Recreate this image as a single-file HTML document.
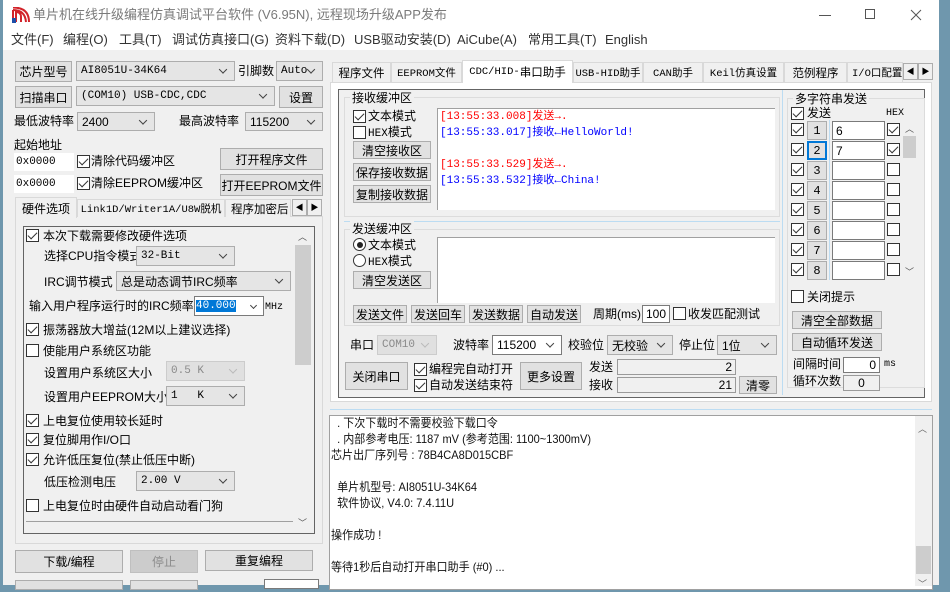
<!DOCTYPE html>
<html><head><meta charset="utf-8"><style>
*{box-sizing:border-box}
body{margin:0;width:950px;height:585px;overflow:hidden;background:#6f97ad;font-family:"Liberation Sans","Noto Sans CJK SC",sans-serif;font-size:12px;color:#000;position:relative}
.a{position:absolute;white-space:nowrap}
.t{position:absolute;white-space:nowrap;line-height:16px;height:16px}
.m{font-family:"Liberation Mono","Noto Sans CJK SC",monospace;font-size:11px}
.btn{position:absolute;background:#e1e1e1;border:1px solid #adadad;display:flex;align-items:center;justify-content:center;white-space:nowrap;font-size:12px}
.dis{background:#cccccc;color:#8c8c8c;border-color:#bfbfbf}
.cmb{position:absolute;background:#e5e5e5;border:1px solid #adadad;padding-left:4px;display:flex;align-items:center;white-space:nowrap}
.cmb::after{content:"";position:absolute;right:8px;top:50%;width:5px;height:5px;border-right:1px solid #444;border-bottom:1px solid #444;transform:translateY(-75%) rotate(45deg)}
.cmb.d{color:#8a8a8a;background:#e0e0e0;border-color:#ccc}
.cmb.d::after{border-color:#bbb}
.in{position:absolute;background:#fff;border:1px solid #7a7a7a;padding:0 3px;display:flex;align-items:center;white-space:nowrap}
.chk{position:absolute;width:13px;height:13px;background:#fff;border:1px solid #333}
.chk.on::after{content:"";position:absolute;left:3px;top:0px;width:4px;height:8px;border-right:1.5px solid #333;border-bottom:1.5px solid #333;transform:rotate(45deg)}
.rad{position:absolute;width:13px;height:13px;background:#fff;border:1px solid #333;border-radius:50%}
.rad.on::after{content:"";position:absolute;left:2.5px;top:2.5px;width:6px;height:6px;border-radius:50%;background:#222}
.grp{position:absolute;border:1px solid #dcdcdc}
.tab{position:absolute;border:1px solid #d9d9d9;border-bottom:none;background:#f0f0f0;display:flex;align-items:center;justify-content:center;white-space:nowrap;font-size:11.5px;overflow:hidden}
.tab.m{font-size:10.5px}
.arr{position:absolute;width:15px;height:17px;background:#f0f0f0;border:1px solid #adadad;font-size:8px;display:flex;align-items:center;justify-content:center}
</style></head><body>
<div class="a" style="left:3px;top:0;width:936px;height:585px;background:#f0f0f0"></div>
<div class="a" style="left:3px;top:0;width:936px;height:50px;background:#fff"></div>
<svg class="a" style="left:12px;top:7px" width="18" height="16" viewBox="0 0 18 16"><path d="M1 15 L1 3 M4 15 L4 5 Q9 5 9 10 L9 15 M1 3 Q13 3 14 15 M1 0.5 Q17 0.5 17 15" stroke="#d2232a" stroke-width="2" fill="none"/><rect x="0" y="11" width="4" height="5" fill="#1e4fa8"/></svg>
<div class="t" style="left:33px;top:7px;color:#7a7a7a;font-size:13px">单片机在线升级编程仿真调试平台软件 (V6.95N), 远程现场升级APP发布</div>
<div class="a" style="left:819px;top:15px;width:12px;height:1px;background:#555"></div>
<div class="a" style="left:865px;top:9px;width:10px;height:10px;border:1px solid #555"></div>
<svg class="a" style="left:910px;top:9px" width="12" height="12"><path d="M1 1L11 11M11 1L1 11" stroke="#555"/></svg>
<div class="t" style="left:11px;top:32px;color:#333;font-size:13px">文件(F)</div>
<div class="t" style="left:63px;top:32px;color:#333;font-size:13px">编程(O)</div>
<div class="t" style="left:119px;top:32px;color:#333;font-size:13px">工具(T)</div>
<div class="t" style="left:172px;top:32px;color:#333;font-size:13px">调试仿真接口(G)</div>
<div class="t" style="left:275px;top:32px;color:#333;font-size:13px">资料下载(D)</div>
<div class="t" style="left:354px;top:32px;color:#333;font-size:13px">USB驱动安装(D)</div>
<div class="t" style="left:457px;top:32px;color:#333;font-size:13px">AiCube(A)</div>
<div class="t" style="left:528px;top:32px;color:#333;font-size:13px">常用工具(T)</div>
<div class="t" style="left:605px;top:32px;color:#333;font-size:13px">English</div>

<div class="btn" style="left:15px;top:61px;width:57px;height:21px">芯片型号</div>
<div class="cmb m" style="left:76px;top:61px;width:159px;height:20px">AI8051U-34K64</div>
<div class="t" style="left:238px;top:63px">引脚数</div>
<div class="cmb m" style="left:276px;top:61px;width:47px;height:20px">Auto</div>
<div class="btn" style="left:15px;top:86px;width:57px;height:22px">扫描串口</div>
<div class="cmb m" style="left:76px;top:86px;width:199px;height:20px">(COM10) USB-CDC,CDC</div>
<div class="btn" style="left:279px;top:86px;width:44px;height:22px">设置</div>
<div class="t" style="left:14px;top:113px">最低波特率</div>
<div class="cmb" style="left:77px;top:112px;width:78px;height:19px;font-size:12px">2400</div>
<div class="t" style="left:179px;top:113px">最高波特率</div>
<div class="cmb" style="left:245px;top:112px;width:78px;height:19px;font-size:12px">115200</div>
<div class="t" style="left:14px;top:137px">起始地址</div>
<div class="in m" style="left:14px;top:153px;width:60px;height:18px;border-color:#fff;padding:0 1px">0x0000</div>
<div class="chk on" style="left:77px;top:155px"></div><div class="t" style="left:91px;top:153px">清除代码缓冲区</div>
<div class="btn" style="left:220px;top:148px;width:103px;height:22px">打开程序文件</div>
<div class="in m" style="left:14px;top:175px;width:60px;height:18px;border-color:#fff;padding:0 1px">0x0000</div>
<div class="chk on" style="left:77px;top:177px"></div><div class="t" style="left:91px;top:175px">清除EEPROM缓冲区</div>
<div class="btn" style="left:220px;top:174px;width:103px;height:22px">打开EEPROM文件</div>
<div class="a" style="left:15px;top:216px;width:308px;height:328px;border:1px solid #d9d9d9;background:#f0f0f0"></div>
<div class="tab" style="left:15px;top:197px;width:62px;height:21px;z-index:2;font-size:12px">硬件选项</div>
<div class="tab m" style="left:77px;top:199px;width:148px;height:18px">Link1D/Writer1A/U8W脱机</div>
<div class="tab" style="left:225px;top:199px;width:66px;height:18px;justify-content:flex-start;padding-left:5px">程序加密后</div>
<div class="arr" style="left:292px;top:199px">◀</div><div class="arr" style="left:307px;top:199px">▶</div>
<div class="a" style="left:23px;top:226px;width:292px;height:308px;border:1px solid #646464;background:#f0f0f0"></div>
<div class="a" style="left:295px;top:245px;width:16px;height:120px;background:#cdcdcd"></div>
<div class="t" style="left:298px;top:229px;font-size:9px;color:#555">︿</div>
<div class="t" style="left:298px;top:515px;font-size:9px;color:#555">﹀</div>
<div class="chk on" style="left:26px;top:229px"></div><div class="t" style="left:43px;top:228px">本次下载需要修改硬件选项</div>
<div class="t" style="left:44px;top:248px">选择CPU指令模式</div>
<div class="cmb m" style="left:136px;top:246px;width:99px;height:20px">32-Bit</div>
<div class="t" style="left:44px;top:274px">IRC调节模式</div>
<div class="cmb" style="left:116px;top:271px;width:175px;height:20px">总是动态调节IRC频率</div>
<div class="t" style="left:29px;top:298px">输入用户程序运行时的IRC频率</div>
<div class="in m" style="left:194px;top:296px;width:70px;height:20px;padding-left:1px"><span style="background:#0078d7;color:#fff">40.000</span></div>
<div class="a" style="left:251px;top:303px;width:5px;height:5px;border-right:1px solid #444;border-bottom:1px solid #444;transform:rotate(45deg)"></div>
<div class="t m" style="left:265px;top:300px;font-size:10px">MHz</div>
<div class="chk on" style="left:26px;top:323px"></div><div class="t" style="left:43px;top:322px">振荡器放大增益(12M以上建议选择)</div>
<div class="chk" style="left:26px;top:344px"></div><div class="t" style="left:43px;top:343px">使能用户系统区功能</div>
<div class="t" style="left:44px;top:365px">设置用户系统区大小</div>
<div class="cmb d m" style="left:166px;top:361px;width:79px;height:20px">0.5 K</div>
<div class="t" style="left:44px;top:389px">设置用户EEPROM大小</div>
<div class="cmb m" style="left:166px;top:386px;width:79px;height:20px">1&nbsp;&nbsp;&nbsp;K</div>
<div class="chk on" style="left:26px;top:414px"></div><div class="t" style="left:43px;top:413px">上电复位使用较长延时</div>
<div class="chk on" style="left:26px;top:433px"></div><div class="t" style="left:43px;top:432px">复位脚用作I/O口</div>
<div class="chk on" style="left:26px;top:453px"></div><div class="t" style="left:43px;top:452px">允许低压复位(禁止低压中断)</div>
<div class="t" style="left:44px;top:474px">低压检测电压</div>
<div class="cmb m" style="left:136px;top:471px;width:99px;height:20px">2.00 V</div>
<div class="chk" style="left:26px;top:499px"></div><div class="t" style="left:43px;top:498px">上电复位时由硬件自动启动看门狗</div>
<div class="a" style="left:26px;top:521px;width:267px;height:1px;background:#a0a0a0"></div>
<div class="btn" style="left:15px;top:550px;width:108px;height:23px">下载/编程</div>
<div class="btn dis" style="left:130px;top:550px;width:68px;height:23px">停止</div>
<div class="btn" style="left:205px;top:550px;width:108px;height:21px">重复编程</div>
<div class="btn" style="left:15px;top:580px;width:108px;height:10px"></div>
<div class="btn" style="left:130px;top:580px;width:68px;height:10px"></div>
<div class="in" style="left:264px;top:579px;width:55px;height:10px"></div>

<div class="a" style="left:330px;top:82px;width:602px;height:320px;background:#fff;border:1px solid #d9d9d9"></div>
<div class="tab" style="left:332px;top:62px;width:59px;height:20px">程序文件</div>
<div class="tab m" style="left:391px;top:62px;width:71px;height:20px">EEPROM文件</div>
<div class="tab" style="left:462px;top:60px;width:111px;height:23px;background:#fff;z-index:2"><span class="m" style="font-size:10.5px">CDC/HID-</span>串口助手</div>
<div class="tab m" style="left:573px;top:62px;width:70px;height:20px">USB-HID助手</div>
<div class="tab m" style="left:643px;top:62px;width:60px;height:20px">CAN助手</div>
<div class="tab m" style="left:703px;top:62px;width:81px;height:20px">Keil仿真设置</div>
<div class="tab" style="left:784px;top:62px;width:63px;height:20px">范例程序</div>
<div class="tab m" style="left:847px;top:62px;width:56px;height:20px;justify-content:flex-start;padding-left:4px">I/O口配置</div>
<div class="arr" style="left:903px;top:63px">◀</div><div class="arr" style="left:918px;top:63px">▶</div>
<div class="a" style="left:338px;top:89px;width:587px;height:309px;border:1px solid #646464;background:#f0f0f0"></div>
<div class="grp" style="left:344px;top:97px;width:436px;height:120px"></div>
<div class="t" style="left:350px;top:90px;background:#f0f0f0;padding:0 2px">接收缓冲区</div>
<div class="chk on" style="left:353px;top:110px"></div><div class="t" style="left:368px;top:108px">文本模式</div>
<div class="chk" style="left:353px;top:126px"></div><div class="t m" style="left:368px;top:124px">HEX<span style="font-family:'Noto Sans CJK SC';font-size:12px">模式</span></div>
<div class="btn" style="left:353px;top:141px;width:78px;height:18px">清空接收区</div>
<div class="btn" style="left:353px;top:163px;width:78px;height:18px">保存接收数据</div>
<div class="btn" style="left:353px;top:185px;width:78px;height:18px">复制接收数据</div>
<div class="a" style="left:437px;top:108px;width:338px;height:102px;background:#fff;border-left:1px solid #a0a0a0;border-top:1px solid #a0a0a0"></div>
<div class="t m" style="left:440px;top:109px;color:#f00">[13:55:33.008]发送→.</div>
<div class="t m" style="left:440px;top:125px;color:#00f">[13:55:33.017]接收←HelloWorld!</div>
<div class="t m" style="left:440px;top:157px;color:#f00">[13:55:33.529]发送→.</div>
<div class="t m" style="left:440px;top:173px;color:#00f">[13:55:33.532]接收←China!</div>
<div class="a" style="left:344px;top:221px;width:436px;height:1px;background:#bcdcf2"></div>
<div class="grp" style="left:344px;top:229px;width:436px;height:97px"></div>
<div class="t" style="left:350px;top:221px;background:#f0f0f0;padding:0 2px">发送缓冲区</div>
<div class="rad on" style="left:353px;top:238px"></div><div class="t" style="left:368px;top:237px">文本模式</div>
<div class="rad" style="left:353px;top:254px"></div><div class="t m" style="left:368px;top:253px">HEX<span style="font-family:'Noto Sans CJK SC';font-size:12px">模式</span></div>
<div class="btn" style="left:353px;top:271px;width:78px;height:18px">清空发送区</div>
<div class="a" style="left:437px;top:237px;width:338px;height:66px;background:#fff;border-left:1px solid #a0a0a0;border-top:1px solid #a0a0a0"></div>
<div class="btn" style="left:353px;top:305px;width:54px;height:18px">发送文件</div>
<div class="btn" style="left:411px;top:305px;width:54px;height:18px">发送回车</div>
<div class="btn" style="left:469px;top:305px;width:54px;height:18px">发送数据</div>
<div class="btn" style="left:527px;top:305px;width:54px;height:18px">自动发送</div>
<div class="t" style="left:593px;top:306px">周期(ms)</div>
<div class="in" style="left:642px;top:305px;width:28px;height:18px;font-size:12px;justify-content:center">100</div>
<div class="chk" style="left:673px;top:307px"></div><div class="t" style="left:688px;top:306px">收发匹配测试</div>
<div class="t" style="left:350px;top:337px">串口</div>
<div class="cmb d m" style="left:377px;top:335px;width:60px;height:20px">COM10</div>
<div class="t" style="left:453px;top:337px">波特率</div>
<div class="cmb" style="left:492px;top:335px;width:70px;height:20px;font-size:12px;background:#fff;border-color:#7a7a7a">115200</div>
<div class="t" style="left:568px;top:337px">校验位</div>
<div class="cmb" style="left:607px;top:335px;width:66px;height:20px">无校验</div>
<div class="t" style="left:679px;top:337px">停止位</div>
<div class="cmb" style="left:717px;top:335px;width:60px;height:20px">1位</div>
<div class="btn" style="left:345px;top:362px;width:63px;height:28px">关闭串口</div>
<div class="chk on" style="left:414px;top:363px"></div><div class="t" style="left:429px;top:361px">编程完自动打开</div>
<div class="chk on" style="left:414px;top:379px"></div><div class="t" style="left:429px;top:377px">自动发送结束符</div>
<div class="btn" style="left:520px;top:362px;width:62px;height:28px">更多设置</div>
<div class="t" style="left:589px;top:359px">发送</div>
<div class="in" style="left:617px;top:359px;width:119px;height:16px;justify-content:flex-end;background:#f0f0f0;border-color:#9a9a9a;font-size:12px">2</div>
<div class="t" style="left:589px;top:377px">接收</div>
<div class="in" style="left:617px;top:377px;width:119px;height:16px;justify-content:flex-end;background:#f0f0f0;border-color:#9a9a9a;font-size:12px">21</div>
<div class="btn" style="left:739px;top:376px;width:38px;height:18px">清零</div>
<div class="a" style="left:782px;top:90px;width:1px;height:305px;background:#bcdcf2"></div>
<div class="grp" style="left:787px;top:98px;width:138px;height:290px"></div>
<div class="t" style="left:793px;top:91px;background:#f0f0f0;padding:0 2px">多字符串发送</div>
<div class="chk on" style="left:791px;top:107px"></div><div class="t" style="left:807px;top:105px">发送</div>
<div class="t m" style="left:886px;top:106px;font-size:10px">HEX</div>
<div class="a" style="left:829px;top:120px;width:1px;height:160px;background:#bcdcf2"></div>
<div class="a" style="left:903px;top:136px;width:13px;height:22px;background:#cdcdcd"></div>
<div class="t" style="left:905px;top:121px;font-size:9px;color:#555">︿</div>
<div class="t" style="left:905px;top:264px;font-size:9px;color:#555">﹀</div>
<div class="chk on" style="left:791px;top:123px"></div><div class="btn m" style="left:807px;top:121px;width:20px;height:19px">1</div><div class="in" style="left:832px;top:121px;width:53px;height:19px;font-size:12px">6</div><div class="chk on" style="left:887px;top:123px"></div>
<div class="chk on" style="left:791px;top:143px"></div><div class="btn m" style="left:807px;top:141px;width:20px;height:19px;border:2px solid #0078d7">2</div><div class="in" style="left:832px;top:141px;width:53px;height:19px;font-size:12px">7</div><div class="chk on" style="left:887px;top:143px"></div>
<div class="chk on" style="left:791px;top:163px"></div><div class="btn m" style="left:807px;top:161px;width:20px;height:19px">3</div><div class="in" style="left:832px;top:161px;width:53px;height:19px"></div><div class="chk" style="left:887px;top:163px"></div>
<div class="chk on" style="left:791px;top:183px"></div><div class="btn m" style="left:807px;top:181px;width:20px;height:19px">4</div><div class="in" style="left:832px;top:181px;width:53px;height:19px"></div><div class="chk" style="left:887px;top:183px"></div>
<div class="chk on" style="left:791px;top:203px"></div><div class="btn m" style="left:807px;top:201px;width:20px;height:19px">5</div><div class="in" style="left:832px;top:201px;width:53px;height:19px"></div><div class="chk" style="left:887px;top:203px"></div>
<div class="chk on" style="left:791px;top:223px"></div><div class="btn m" style="left:807px;top:221px;width:20px;height:19px">6</div><div class="in" style="left:832px;top:221px;width:53px;height:19px"></div><div class="chk" style="left:887px;top:223px"></div>
<div class="chk on" style="left:791px;top:243px"></div><div class="btn m" style="left:807px;top:241px;width:20px;height:19px">7</div><div class="in" style="left:832px;top:241px;width:53px;height:19px"></div><div class="chk" style="left:887px;top:243px"></div>
<div class="chk on" style="left:791px;top:263px"></div><div class="btn m" style="left:807px;top:261px;width:20px;height:19px">8</div><div class="in" style="left:832px;top:261px;width:53px;height:19px"></div><div class="chk" style="left:887px;top:263px"></div>
<div class="chk" style="left:791px;top:290px"></div><div class="t" style="left:807px;top:289px">关闭提示</div>
<div class="btn" style="left:792px;top:311px;width:90px;height:18px">清空全部数据</div>
<div class="btn" style="left:792px;top:333px;width:90px;height:18px">自动循环发送</div>
<div class="t" style="left:793px;top:356px">间隔时间</div>
<div class="in" style="left:843px;top:357px;width:37px;height:16px;justify-content:flex-end;font-size:12px">0</div>
<div class="t m" style="left:884px;top:357px;font-size:10px">ms</div>
<div class="t" style="left:793px;top:373px">循环次数</div>
<div class="in" style="left:843px;top:375px;width:37px;height:16px;justify-content:center;font-size:12px;background:#f0f0f0;border-color:#9a9a9a">0</div>

<div class="a" style="left:330px;top:409px;width:602px;height:1px;background:#bcdcf2"></div>
<div class="a" style="left:329px;top:415px;width:604px;height:175px;background:#fff;border:1px solid #a0a0a0"></div>
<div class="a" style="left:915px;top:416px;width:17px;height:170px;background:#f0f0f0"></div>
<div class="a" style="left:916px;top:546px;width:15px;height:28px;background:#cdcdcd"></div>
<div class="t" style="left:918px;top:421px;font-size:9px;color:#666">︿</div>
<div class="t" style="left:918px;top:576px;font-size:9px;color:#666">﹀</div>
<div style="position:absolute;left:331px;top:415px;font-size:12px;line-height:16px;white-space:pre;color:#111;font-family:'Liberation Sans','Noto Sans CJK SC',sans-serif;transform:scaleX(0.92);transform-origin:0 0">  . 下次下载时不需要校验下载口令
  . 内部参考电压: 1187 mV (参考范围: 1100~1300mV)
芯片出厂序列号 : 78B4CA8D015CBF

  单片机型号: AI8051U-34K64
  软件协议, V4.0: 7.4.11U

操作成功 !

等待1秒后自动打开串口助手 (#0) ...</div>
</body></html>
